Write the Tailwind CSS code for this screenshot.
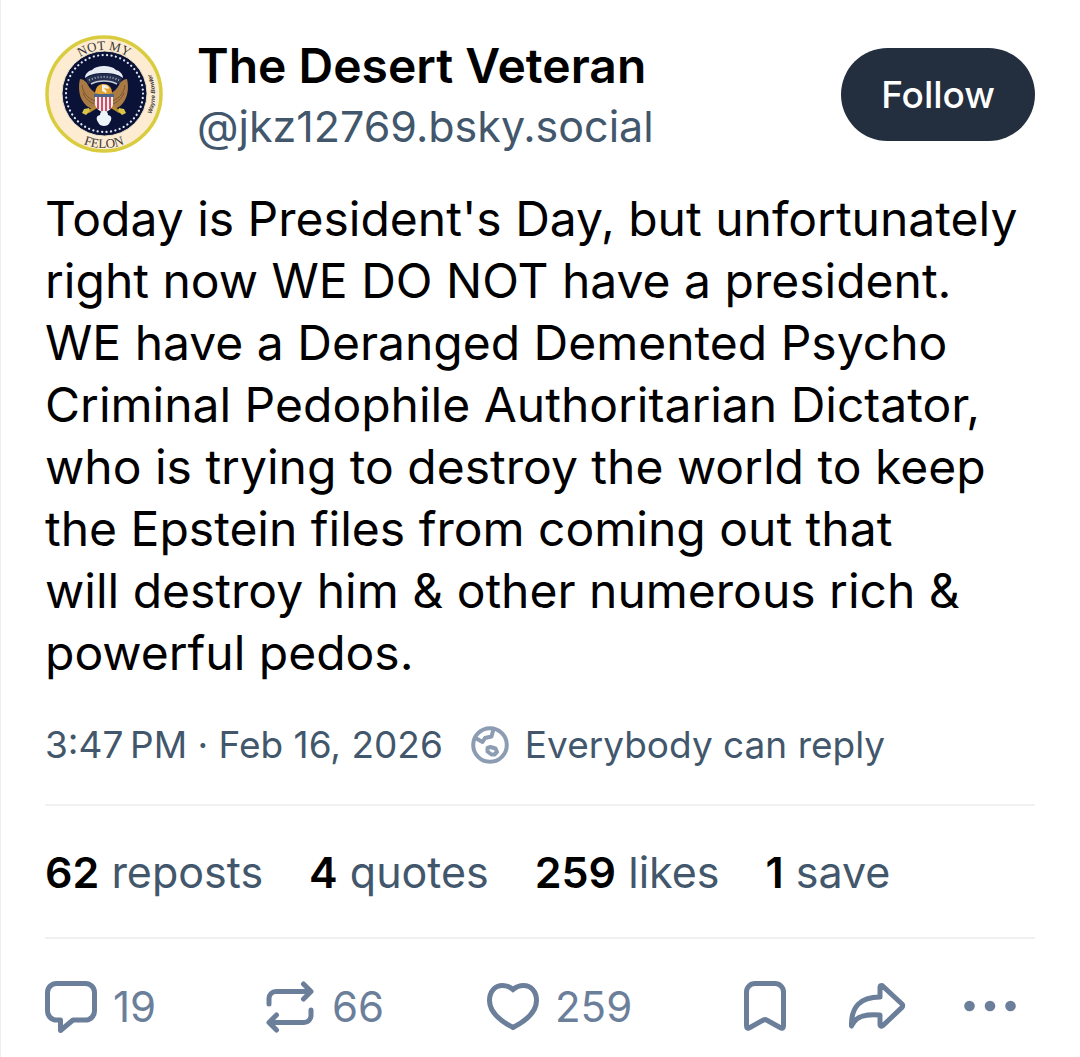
<!DOCTYPE html>
<html lang="en">
<head>
    <meta charset="UTF-8">
    <meta name="viewport" content="width=device-width, initial-scale=1.0">
    <title>The Desert Veteran (@jkz12769.bsky.social)</title>
    <script src="https://cdn.jsdelivr.net/npm/@tailwindcss/browser@4"></script>
</head>
<body class="bg-white">
    <article class="min-h-screen border-l border-[#eceef0] pl-[44px] pr-[45px] pt-[35px] font-['Inter',sans-serif] text-black">
        <!-- Author -->
        <header class="flex items-start">
            <a href="#" aria-label="The Desert Veteran's avatar" class="shrink-0">
                <svg class="size-[118px]" viewBox="0 0 118 118">
                    <defs>
                        <path id="arcTop" d="M15 59a44 44 0 0 1 88 0"/>
                        <path id="arcBottom" d="M5 59a54 54 0 0 0 108 0"/>
                        <path id="arcRight" d="M57 112a53 53 0 0 0 0-106"/>
                    </defs>
                    <circle cx="59" cy="59" r="57" fill="#fdecd2" stroke="#d9cd3f" stroke-width="3.500"/>
                    <circle cx="59.500" cy="58.500" r="42.500" fill="#0b1238" stroke="#e9dfc6" stroke-width="1"/>
                    <circle cx="59.500" cy="58.500" r="38.500" fill="none" stroke="#e4e8f2" stroke-width="2.200" stroke-linecap="round" stroke-dasharray="0.1 4.380"/>
                    <g fill="#3a3638" font-family="Liberation Serif, serif" text-anchor="middle">
                        <text font-size="13"><textPath href="#arcTop" startOffset="50%">NOT MY</textPath></text>
                        <text font-size="13"><textPath href="#arcBottom" startOffset="50%">FELON</textPath></text>
                        <text font-size="6" font-family="Liberation Sans, sans-serif" font-style="italic" font-weight="bold"><textPath href="#arcRight" startOffset="50%">Wayne Bowler</textPath></text>
                    </g>
                    <!-- Cloud and motto above the eagle -->
                    <path d="M40 43c0-4 3-7 7-8 3-3 7-4 12-4s9 1 12 4c4 1 7 4 7 8-5-4-12-5-19-5s-14 1-19 5z" fill="#e8edf3"/>
                    <path d="M41 43c11-6 25-6 36 0l-2 6c-9-4-23-4-32 0z" fill="#26304f"/>
                    <path d="M44 45c9-4 21-4 30 0" fill="none" stroke="#aab4c4" stroke-width="2" stroke-dasharray="1 2"/>
                    <path d="M46 49c7-4 19-4 26 0" fill="none" stroke="#c9d0da" stroke-width="1.500"/>
                    <!-- Wings -->
                    <path d="M35 44c-2 8-1 18 4 24 3 4 7 6 11 6l3-15c-5-2-8-5-10-9-1-3-5-6-8-6z" fill="#a97a44"/>
                    <path d="M82 44c2 8 1 18-4 24-3 4-7 6-11 6l-3-15c5-2 8-5 10-9 1-3 5-6 8-6z" fill="#a97a44"/>
                    <path d="M37 50c1 8 5 13 13 16M38 58c2 5 5 8 11 11M80 50c-1 8-5 13-13 16M79 58c-2 5-5 8-11 11" fill="none" stroke="#7b5430" stroke-width="1"/>
                    <!-- Legs and tail -->
                    <path d="M51 72l-8 5M67 72l8 5" stroke="#b58a2c" stroke-width="3"/>
                    <path d="M39 74l5-1 1 3-4 4-4-2zM79 74l-5-1-1 3 4 4 4-2z" fill="#d7c449"/>
                    <path d="M59 76c-3 0-4 2-4 4-4 1-4 4-2 7 1 3 4 4 6 4s5-1 6-4c2-3 2-6-2-7 0-2-1-4-4-4z" fill="#edf4fa"/>
                    <!-- Head and shield -->
                    <path d="M50 58c1-7 4-9 9-9 4 0 8 3 8 9l-8 3z" fill="#e0a135"/>
                    <path d="M57 50c3-1 6 0 7 3l-3 5-4-2z" fill="#f3efe4"/>
                    <path d="M59 53l5 1-2 3z" fill="#ef9e1f"/>
                    <path d="M50 62h18v7c0 4-4 7-9 9-5-2-9-5-9-9z" fill="#f6eef0"/>
                    <path d="M53 62v12M57 62v14M61 62v14M65 62v12" stroke="#cd3b55" stroke-width="1.800"/>
                    <path d="M49 59h20v3H49z" fill="#4c6586"/>
                </svg>
            </a>
            <div class="ml-[34px] min-w-0 flex-1">
                <h1 class="text-[48px] leading-[62px] font-semibold"><a href="#">The Desert Veteran</a></h1>
                <p class="text-[43px] leading-[58px] text-[#42576c]"><a href="#">@jkz12769.bsky.social</a></p>
            </div>
            <button type="button" class="mt-[13px] h-[93px] shrink-0 rounded-full bg-[#232e3e] px-10 text-[37px] font-medium text-white">Follow</button>
        </header>

        <!-- Post text -->
        <p class="mt-[33px] text-[48px] leading-[62px]">Today is President's Day, but unfortunately<br>
            right now WE DO NOT have a president.<br>
            WE have a Deranged Demented Psycho<br>
            Criminal Pedophile Authoritarian Dictator,<br>
            who is trying to destroy the world to keep<br>
            the Epstein files from coming out that<br>
            will destroy him &amp; other numerous rich &amp;<br>
            powerful pedos.</p>

        <!-- Date and reply setting -->
        <div class="mt-9 flex items-center pb-[34px] text-[37px] leading-[50px] text-[#42576c]">
            <time datetime="2026-02-16T15:47">3:47&#8239;PM · Feb 16, 2026</time>
            <button type="button" class="ml-7 flex items-center gap-4">
                <svg class="size-[38px]" viewBox="0 0 38 38" fill="none" stroke="#8c9db3" stroke-width="4" stroke-linejoin="round">
                    <circle cx="19" cy="19" r="16.800"/>
                    <path d="M4.500 12l7 4 2.500-4 6.500-1.500 2-7.500"/>
                    <path d="M16.500 22l3-1 5 1.500 1.500 3.500-2.500 2.500h-3l-4-3z"/>
                </svg>
                <span>Everybody can reply</span>
            </button>
        </div>

        <!-- Stats -->
        <div class="flex gap-[46px] border-y-2 border-[#eff1f3] pt-[38px] pb-[37px] text-[43px] leading-[56px] text-[#42576c]">
            <a href="#"><span class="font-semibold text-black">62</span> reposts</a>
            <a href="#"><span class="font-semibold text-black">4</span> quotes</a>
            <a href="#"><span class="font-semibold text-black">259</span> likes</a>
            <a href="#"><span class="font-semibold text-black">1</span> save</a>
        </div>

        <!-- Actions -->
        <div class="flex items-center pt-10 pr-[19px] text-[42px] leading-[56px] text-[#6b7f9b]">
            <div class="mr-9 grid flex-1 grid-cols-3">
                <button type="button" aria-label="Reply, 19" class="flex items-center gap-4">
                    <svg class="h-[52px] w-[52px]" viewBox="0 0 52 52" fill="none" stroke="currentColor" stroke-width="5" stroke-linejoin="round">
                        <path d="M11.500 2.500h29a9 9 0 0 1 9 9v18.500a9 9 0 0 1-9 9H28L15.500 49.500V39h-4a9 9 0 0 1-9-9V11.500a9 9 0 0 1 9-9z"/>
                    </svg>
                    <span>19</span>
                </button>
                <button type="button" aria-label="Repost, 66" class="flex items-center gap-[18px]">
                    <svg class="h-[52px] w-[48px]" viewBox="0 0 48 52" fill="none" stroke="currentColor" stroke-width="5" stroke-linecap="round" stroke-linejoin="round">
                        <path d="M3 23v-5.500a7 7 0 0 1 7-7h34M37.500 3l7.500 7.500-7.500 7.500"/>
                        <path d="M45 29v5.500a7 7 0 0 1-7 7H4M10.500 34L3 41.500l7.500 7.500"/>
                    </svg>
                    <span>66</span>
                </button>
                <button type="button" aria-label="Like, 259" class="flex items-center gap-4">
                    <svg class="h-[48px] w-[52px]" viewBox="0 0 52 48" fill="none" stroke="currentColor" stroke-width="5">
                        <path d="M26 6.500C22.500 3.500 19 2.500 15.500 2.500 8 2.500 2.500 8.500 2.500 17.500 2.500 28.500 11.500 37 26 44.500 40.500 37 49.500 28.500 49.500 17.500 49.500 8.500 44 2.500 36.500 2.500 33 2.500 29.500 3.500 26 6.500z"/>
                    </svg>
                    <span>259</span>
                </button>
            </div>
            <div class="flex items-center pb-[3px]">
                <button type="button" aria-label="Save">
                    <svg class="h-[50px] w-[42px]" viewBox="0 0 42 50" fill="none" stroke="currentColor" stroke-width="5" stroke-linejoin="round">
                        <path d="M2.500 45V11a8.500 8.500 0 0 1 8.500-8.500h20a8.500 8.500 0 0 1 8.500 8.500v34c0 2-1.500 2.700-3 1.800L22.500 39a3 3 0 0 0-3 0L5.500 46.800c-1.500.9-3 .2-3-1.800z"/>
                    </svg>
                </button>
                <button type="button" aria-label="Share" class="ml-[63px]">
                    <svg class="h-[46px] w-[57px]" viewBox="0 0 57 46" fill="none" stroke="currentColor" stroke-width="5" stroke-linecap="round" stroke-linejoin="round">
                        <path d="M31 14V4.500c0-2 1.700-2.500 3-1.200l19 17.700c1 1 1 2.400 0 3.400L34 42.500c-1.300 1.300-3 .8-3-1.200V32c-12-1-22 .5-26 7l-2.500 4C2 24 11 14 31 14z"/>
                    </svg>
                </button>
                <button type="button" aria-label="More options" class="ml-[58px]">
                    <svg class="h-[12px] w-[52px]" viewBox="0 0 52 12" fill="currentColor">
                        <circle cx="5.500" cy="6" r="5.300"/>
                        <circle cx="26" cy="6" r="5.300"/>
                        <circle cx="46.500" cy="6" r="5.300"/>
                    </svg>
                </button>
            </div>
        </div>
    </article>
</body>
</html>
